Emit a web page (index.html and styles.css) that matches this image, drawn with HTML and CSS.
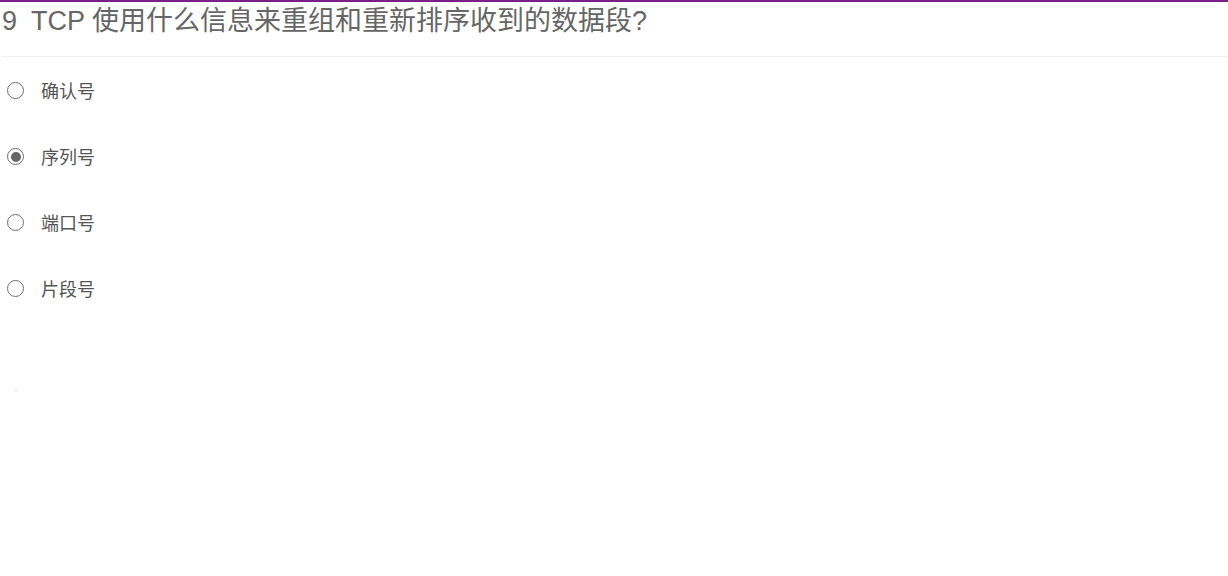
FILE: index.html
```html
<!DOCTYPE html>
<html lang="zh-CN">
<head>
<meta charset="utf-8">
<title>Quiz</title>
<link rel="stylesheet" href="styles.css">
</head>
<body>
<div class="page">
  <h3 class="question"><span class="num">9</span>TCP 使用什么信息来重组和重新排序收到的数据段?</h3>
  <div class="divider"></div>
  <div class="options">
    <label class="option"><span class="radio"></span><span class="text">确认号</span></label>
    <label class="option"><span class="radio checked"></span><span class="text">序列号</span></label>
    <label class="option"><span class="radio"></span><span class="text">端口号</span></label>
    <label class="option"><span class="radio"></span><span class="text">片段号</span></label>
  </div>
  <div class="speck"></div>
</div>
</body>
</html>
```

FILE: styles.css
```css
html, body {
  margin: 0;
  padding: 0;
  background: #fff;
}
body {
  font-family: "Liberation Sans", "Noto Sans CJK SC", sans-serif;
  border-top: 2px solid #7a1f86;
}
.page {
  display: flex;
  flex-direction: column;
}
.question {
  margin: 0;
  padding: 3px 0 0 2px;
  font-size: 27px;
  line-height: 32px;
  font-weight: normal;
  color: #666;
}
.num {
  margin-right: 14px;
}
.divider {
  margin: 19px 0 0 2px;
  height: 1px;
  background: #eee;
}
.options {
  display: flex;
  flex-direction: column;
  padding-top: 24px;
}
.option {
  display: flex;
  align-items: center;
  height: 22px;
  margin-bottom: 44px;
}
.radio {
  box-sizing: border-box;
  width: 17px;
  height: 17px;
  margin: -3px 0 0 7px;
  border: 1.6px solid #6e6e6e;
  border-radius: 50%;
  display: flex;
  align-items: center;
  justify-content: center;
}
.radio.checked::after {
  content: "";
  width: 10px;
  height: 10px;
  border-radius: 50%;
  background: #666;
}
.text {
  margin-left: 17px;
  font-size: 18px;
  color: #555;
  line-height: 22px;
}
.speck {
  margin: 45px 0 0 15px;
  width: 2px;
  height: 1px;
  background: #d8d8d8;
}
```
